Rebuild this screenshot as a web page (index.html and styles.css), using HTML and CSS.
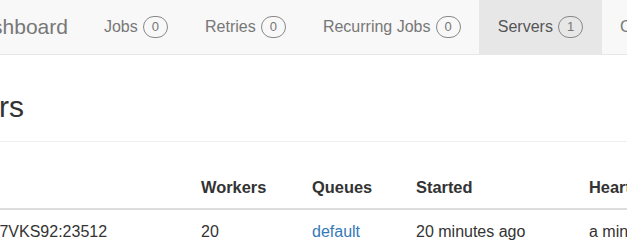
FILE: index.html
```html
<!DOCTYPE html>
<html>
<head>
<meta charset="utf-8">
<link rel="stylesheet" href="styles.css">
</head>
<body>
<nav class="navbar">
  <a class="brand" href="#">Hangfire Dashboard</a>
  <ul class="nav">
    <li class="nav-item"><a href="#">Jobs</a><span class="badge">0</span></li>
    <li class="nav-item"><a href="#">Retries</a><span class="badge">0</span></li>
    <li class="nav-item"><a href="#">Recurring Jobs</a><span class="badge">0</span></li>
    <li class="nav-item active"><a href="#">Servers</a><span class="badge">1</span></li>
    <li class="nav-item"><a href="#">Console</a></li>
  </ul>
</nav>
<main class="content">
  <h1 class="page-header">Servers</h1>
  <table class="table">
    <colgroup>
      <col class="c-name"><col class="c-workers"><col class="c-queues"><col class="c-started"><col class="c-heart">
    </colgroup>
    <thead>
      <tr><th>Name</th><th>Workers</th><th>Queues</th><th>Started</th><th>Heartbeat</th></tr>
    </thead>
    <tbody>
      <tr><td>SERVER-7VKS92:23512</td><td>20</td><td><a href="#">default</a></td><td>20 minutes ago</td><td>a minute ago</td></tr>
    </tbody>
  </table>
</main>
</body>
</html>
```
FILE: styles.css
```css
html, body {
  margin: 0;
  padding: 0;
  overflow: hidden;
  background: #fff;
}
body {
  font-family: "Liberation Sans", Arial, sans-serif;
  font-size: 16px;
  color: #333;
  width: 627px;
  height: 249px;
}
a { text-decoration: none; }

.navbar {
  display: flex;
  align-items: stretch;
  height: 54px;
  background: #f8f8f8;
  border-bottom: 1px solid #e7e7e7;
  white-space: nowrap;
}
.brand {
  flex: none;
  margin-left: -120px;
  margin-right: 18px;
  font-size: 21px;
  line-height: 54px;
  color: #777;
}
.nav {
  display: flex;
  flex: none;
  margin: 0 0 0 -0.5px;
  padding: 0;
  list-style: none;
}
.nav-item {
  display: flex;
  align-items: center;
  padding: 0 18.5px;
  gap: 5px;
}
.nav-item a {
  color: #777;
  line-height: 20px;
}
.nav-item.active {
  background: #e7e7e7;
}
.nav-item.active a { color: #555; }
.badge {
  display: inline-block;
  box-sizing: border-box;
  min-width: 25px;
  height: 22px;
  padding: 0 8px;
  border: 1px solid #888;
  border-radius: 11px;
  font-size: 13px;
  line-height: 20px;
  text-align: center;
  color: #777;
}

.content {
  margin-left: -79.4px;
  width: 760px;
}
.page-header {
  margin: 35px 0 0 0;
  padding-bottom: 18px;
  font-size: 30px;
  font-weight: normal;
  line-height: 33px;
  color: #333;
  border-bottom: 1px solid #eee;
}
.table {
  margin-top: 24px;
  border-collapse: collapse;
  table-layout: fixed;
  width: 760px;
}
.c-name { width: 272.4px; }
.c-workers { width: 111px; }
.c-queues { width: 104px; }
.c-started { width: 173px; }
.c-heart { width: 99.6px; }
.table th, .table td {
  padding: 10px 8px;
  line-height: 22px;
  text-align: left;
  white-space: nowrap;
  overflow: hidden;
}
.table th {
  font-weight: bold;
  font-size: 16.4px;
  border-bottom: 2px solid #ddd;
}
.table td {
  padding-top: 11px;
  border-top: 1px solid #ddd;
}
.table tbody tr:first-child td { border-top: 0; }
.table td a { color: #337ab7; }
```
